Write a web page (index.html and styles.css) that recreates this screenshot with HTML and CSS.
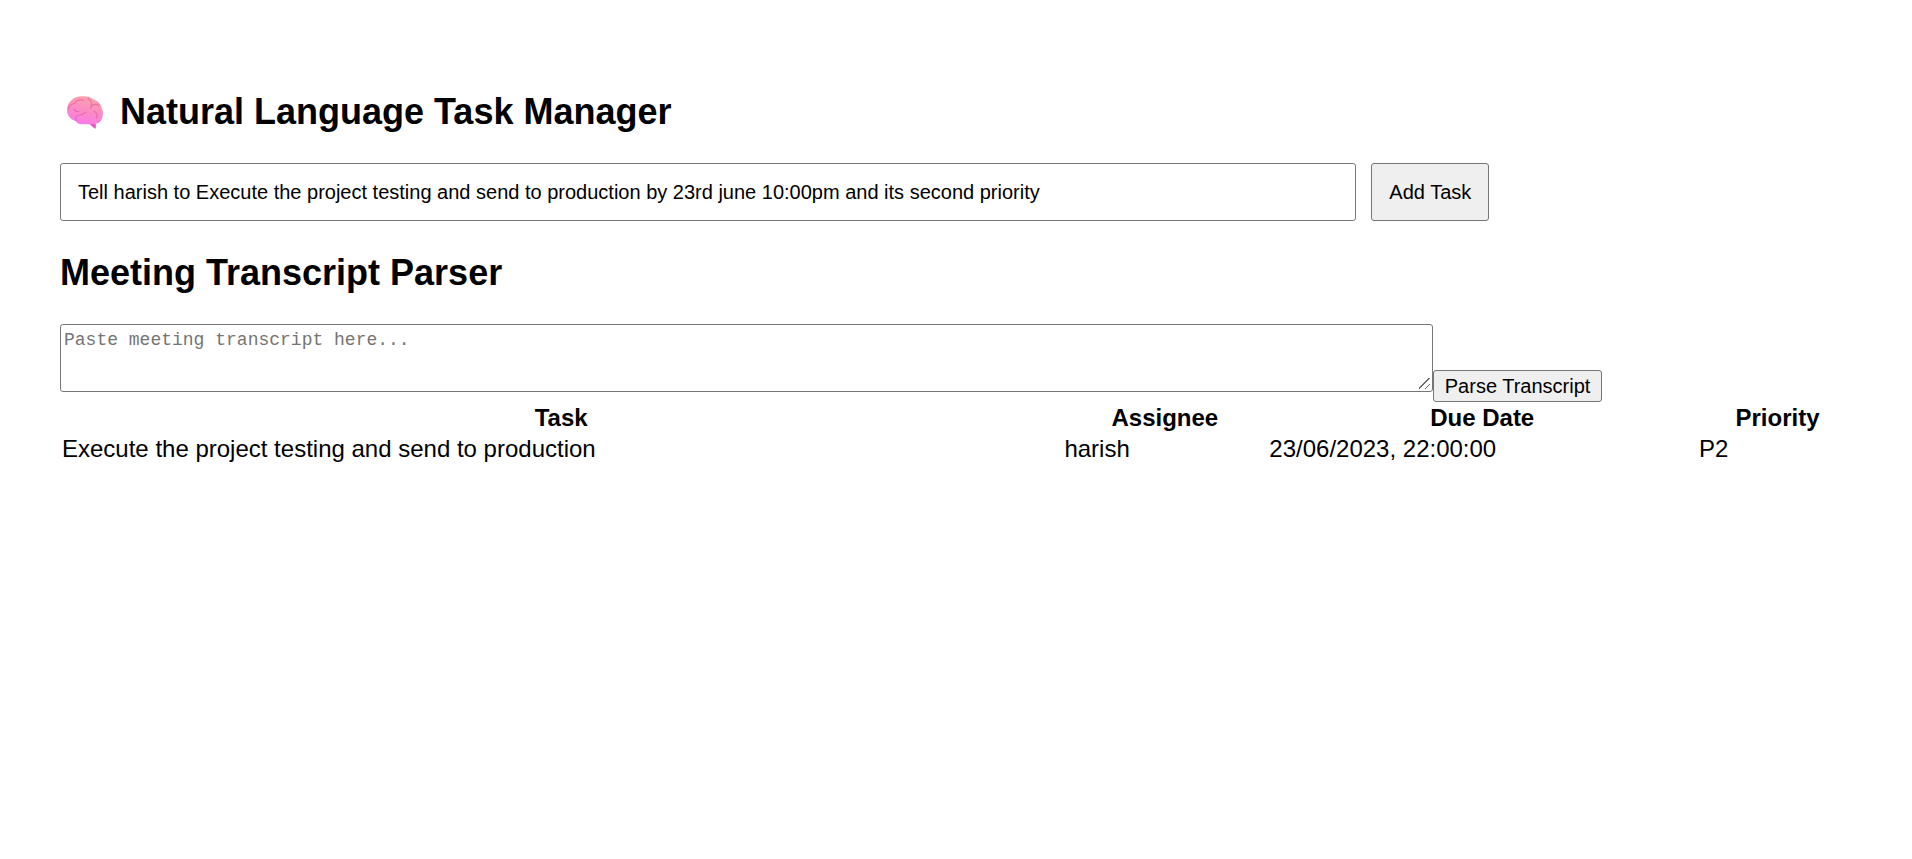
FILE: index.html
```html
<!DOCTYPE html>
<html lang="en">
<head>
<meta charset="utf-8">
<title>Natural Language Task Manager</title>
<link rel="stylesheet" href="styles.css">
</head>
<body>
<main class="page">
  <h2 class="heading">
    <svg class="brain" viewBox="0 0 50 36" aria-hidden="true">
      <defs>
        <linearGradient id="lobe" x1="0.7" y1="0" x2="0.4" y2="1">
          <stop offset="0" stop-color="#fba3a8"/>
          <stop offset="0.5" stop-color="#fb8cc4"/>
          <stop offset="1" stop-color="#fb7be6"/>
        </linearGradient>
      </defs>
      <path fill="#e556bd" d="M29.500 29.500h6.300V34.200c-.4.600-1 .5-1.400 0L30 30.500z"/>
      <path fill="url(#lobe)" d="M7 17C6.900 12 8.700 8 12.300 5.500 15 3 19 2 23 2.200c4-.3 8 .9 10.700 3.300C38.500 7 41.500 11 42 15c1.300 2.500 1.300 6.500 0 9.500-1.200 3.600-4.500 5.700-8.500 5.700H21.500c-2.500 0-4.700-1-5.700-3.200C11.200 26 7.400 22 7 17z"/>
      <g fill="none" stroke="#dc5f9c" stroke-width="1.200" stroke-linecap="round" opacity="0.65">
        <path d="M8.500 14.500c1-3 3.500-4.500 6-5 2-3 5.500-4.500 9-3"/>
        <path d="M16 26.500c-1.500-3 .5-5.500 4-5.500 2.500 0 3.500-2 6-2.500"/>
        <path d="M28 4.500c3.500 2 4.500 6 2.500 10M31.500 12c2.500-2 5-2 7.500-.5M34 17c2.500 1.500 3.500 4 2.500 7"/>
        <path d="M14 15c1 2 3 3 5 2.500"/>
      </g>
    </svg>
    Natural Language Task Manager
  </h2>
  <form class="task-form">
    <input class="task-input" type="text" aria-label="Task" value="Tell harish to Execute the project testing and send to production by 23rd june 10:00pm and its second priority">
    <button class="button button-large" type="button">Add Task</button>
  </form>
  <h2 class="heading">Meeting Transcript Parser</h2>
  <form class="transcript-form">
    <textarea class="transcript" aria-label="Meeting transcript" placeholder="Paste meeting transcript here..."></textarea>
    <button class="button" type="button">Parse Transcript</button>
  </form>
  <table class="tasks">
    <thead>
      <tr>
        <th class="col-task">Task</th>
        <th class="col-assignee">Assignee</th>
        <th class="col-due">Due Date</th>
        <th>Priority</th>
      </tr>
    </thead>
    <tbody>
      <tr>
        <td>Execute the project testing and send to production</td>
        <td>harish</td>
        <td>23/06/2023, 22:00:00</td>
        <td>P2</td>
      </tr>
    </tbody>
  </table>
</main>
</body>
</html>
```
FILE: styles.css
```css
* {
  box-sizing: border-box;
}

body {
  margin: 0;
  background: #fff;
  color: #000;
  font-family: Arial, "Liberation Sans", sans-serif;
  font-size: 24px;
}

.page {
  display: flow-root;
  padding: 60px 54px 60px 60px;
}

.heading {
  display: flex;
  align-items: center;
  gap: 10px;
  margin: 30px 0;
  font-size: 36px;
  line-height: 43px;
}

.brain {
  flex: none;
  width: 50px;
  height: 36px;
}

.task-form {
  display: flex;
  gap: 15px;
}

.task-input,
.transcript,
.button {
  margin: 0;
  border: 1px solid #767676;
  border-radius: 3px;
  color: #000;
  font-size: 20px;
  line-height: 24px;
}

.task-input,
.button {
  font-family: Arial, "Liberation Sans", sans-serif;
}

.task-input {
  width: 72.1%;
  padding: 16px 17px;
  background: #fff;
}

.button {
  padding: 3px 11px;
  background: #efefef;
  white-space: nowrap;
}

.button-large {
  padding: 16px 17px;
}

.transcript-form {
  display: flex;
  align-items: flex-end;
}

.transcript {
  width: 76.35%;
  height: 68px;
  margin-bottom: 10px;
  padding: 3px;
  background: #fff;
  font-family: Consolas, "Liberation Mono", monospace;
  font-size: 18px;
  resize: both;
}

.transcript::placeholder {
  color: #757575;
}

.transcript::-webkit-resizer {
  background: linear-gradient(135deg, transparent 45%, #666 45%, #666 53%, transparent 53%, transparent 73%, #666 73%, #666 81%, transparent 81%) center / 11px 11px no-repeat;
}

.tasks {
  width: 100%;
  border-collapse: collapse;
  line-height: 29px;
}

.tasks th,
.tasks td {
  padding: 1px 2px;
}

.tasks td {
  text-align: left;
}

.col-task {
  width: 55.75%;
}

.col-assignee {
  width: 11.4%;
}

.col-due {
  width: 23.9%;
}
```
